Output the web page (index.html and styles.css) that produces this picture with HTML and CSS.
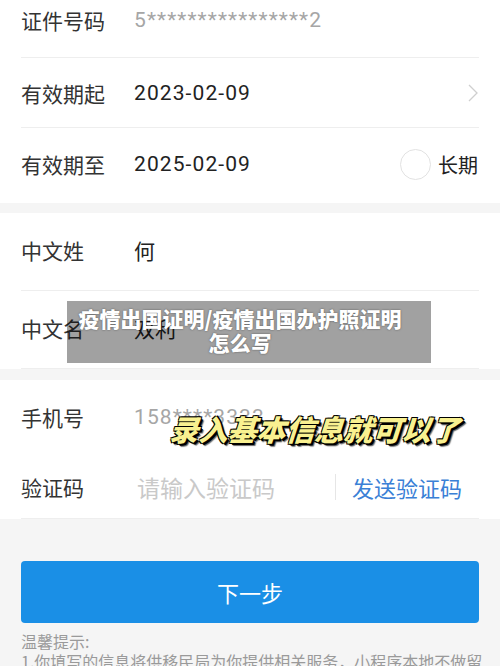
FILE: index.html
```html
<!DOCTYPE html>
<html lang="zh-CN">
<head>
    <meta charset="UTF-8">
    <meta name="viewport" content="width=device-width, initial-scale=1.0">
    <title>录入基本信息</title>
    <link rel="stylesheet" href="styles.css">
</head>
<body>
    <div class="section section-first">
        <div class="row row-top">
            <span class="label">证件号码</span>
            <span class="value muted">5****************2</span>
        </div>
        <div class="row">
            <span class="label">有效期起</span>
            <span class="value">2023-02-09</span>
            <svg class="chevron" width="10" height="20" viewBox="0 0 10 20">
                <polyline points="1,2 9,10 1,18" fill="none" stroke="#cfcfcf" stroke-width="1.3"/>
            </svg>
        </div>
        <div class="row row-tall no-line">
            <span class="label">有效期至</span>
            <span class="value">2025-02-09</span>
            <span class="radio"></span>
            <span class="long">长期</span>
        </div>
    </div>

    <div class="section section-names">
        <div class="row row-name">
            <span class="label">中文姓</span>
            <span class="value cjk">何</span>
        </div>
        <div class="row row-name">
            <span class="label">中文名</span>
            <span class="value cjk">双利</span>
        </div>
    </div>

    <div class="section section-phone">
        <div class="row row-phone no-line">
            <span class="label">手机号</span>
            <span class="value muted">158****3333</span>
        </div>
        <div class="row row-code">
            <span class="label">验证码</span>
            <span class="value placeholder">请输入验证码</span>
            <span class="divider"></span>
            <span class="send">发送验证码</span>
        </div>
    </div>

    <div class="footer">
        <div class="button">下一步</div>
        <div class="hint">
            <p>温馨提示:</p>
            <p>1.你填写的信息将供移民局为你提供相关服务，小程序本地不做留</p>
        </div>
    </div>

    <div class="title-box">
        <p>疫情出国证明/疫情出国办护照证明</p>
        <p>怎么写</p>
    </div>
    <div class="caption">录入基本信息就可以了</div>
</body>
</html>
```

FILE: styles.css
```css
body {
    font-family: 'Noto Sans CJK SC', 'Noto Sans', sans-serif;
    margin: 0;
    padding: 0;
    width: 500px;
    height: 666px;
    overflow: hidden;
    position: relative;
    background-color: #f5f5f5;
}
.section {
    background-color: #fff;
}
.section-first {
    margin-top: -17px;
}
.section-names {
    margin-top: 10px;
}
.section-phone {
    margin-top: 11px;
}
.row {
    display: flex;
    align-items: center;
    box-sizing: border-box;
    height: 70px;
    margin: 0 21px;
    border-bottom: 1px solid #eeeeee;
}
.row.no-line {
    border-bottom: none;
}
.row-top {
    height: 75px;
}
.row-tall {
    height: 75px;
    padding-bottom: 3px;
}
.row-name {
    height: 78px;
    padding-bottom: 3px;
}
.row-phone {
    height: 72px;
    padding-top: 1px;
}
.row-code {
    height: 67px;
    padding-top: 4px;
}
.label {
    width: 113px;
    font-size: 21px;
    color: #333;
    flex-shrink: 0;
}
.value {
    font-family: 'Roboto', 'Noto Sans CJK SC', sans-serif;
    font-size: 21px;
    letter-spacing: 1.1px;
    color: #222;
    flex: 1;
}
.value.cjk {
    font-family: 'Noto Sans CJK SC', sans-serif;
    letter-spacing: 0;
}
.value.muted {
    color: #a6a6a6;
}
.value.placeholder {
    font-family: 'Noto Sans CJK SC', sans-serif;
    font-size: 23px;
    letter-spacing: 0;
    color: #c9c9c9;
    padding-left: 3px;
}
.chevron {
    margin-right: 1px;
}
.radio {
    width: 29px;
    height: 29px;
    border: 1px solid #e2e2e2;
    border-radius: 50%;
    margin-right: 7px;
}
.long {
    font-size: 20px;
    color: #222;
    margin-right: 1px;
}
.divider {
    width: 1px;
    height: 26px;
    background-color: #e6e6e6;
    margin-right: 16px;
}
.send {
    font-size: 22px;
    color: #3a80d6;
    margin-right: 17px;
}
.footer {
    padding: 42px 21px 0;
}
.button {
    height: 62px;
    background-color: #1a8fe6;
    border-radius: 4px;
    color: #fff;
    font-size: 22px;
    display: flex;
    align-items: center;
    justify-content: center;
}
.hint {
    margin-top: 8px;
    color: #9a9a9a;
    font-size: 16px;
    line-height: 20px;
    white-space: nowrap;
}
.hint p {
    margin: 0;
}
.title-box {
    position: absolute;
    left: 67px;
    top: 301px;
    width: 364px;
    height: 62px;
    background-color: rgba(0, 0, 0, 0.37);
    color: #fff;
    font-weight: 900;
    font-size: 21px;
    line-height: 24px;
    text-align: center;
    padding: 5px 18px 0 0;
    box-sizing: border-box;
    text-shadow: 0 0 2px rgba(0, 0, 0, 0.5);
}
.title-box p {
    margin: 0;
    white-space: nowrap;
}
.caption {
    position: absolute;
    left: 170px;
    top: 407px;
    font-size: 29px;
    font-weight: 900;
    font-style: italic;
    color: #f9f190;
    transform: skewX(-4deg);
    text-shadow: -1px -1px 0 #000, 1px -1px 0 #000, -1px 1px 0 #000, 1px 1px 0 #000, 2px 2px 0 #000, 3px 3px 1px rgba(0, 0, 0, 0.6);
}
```
